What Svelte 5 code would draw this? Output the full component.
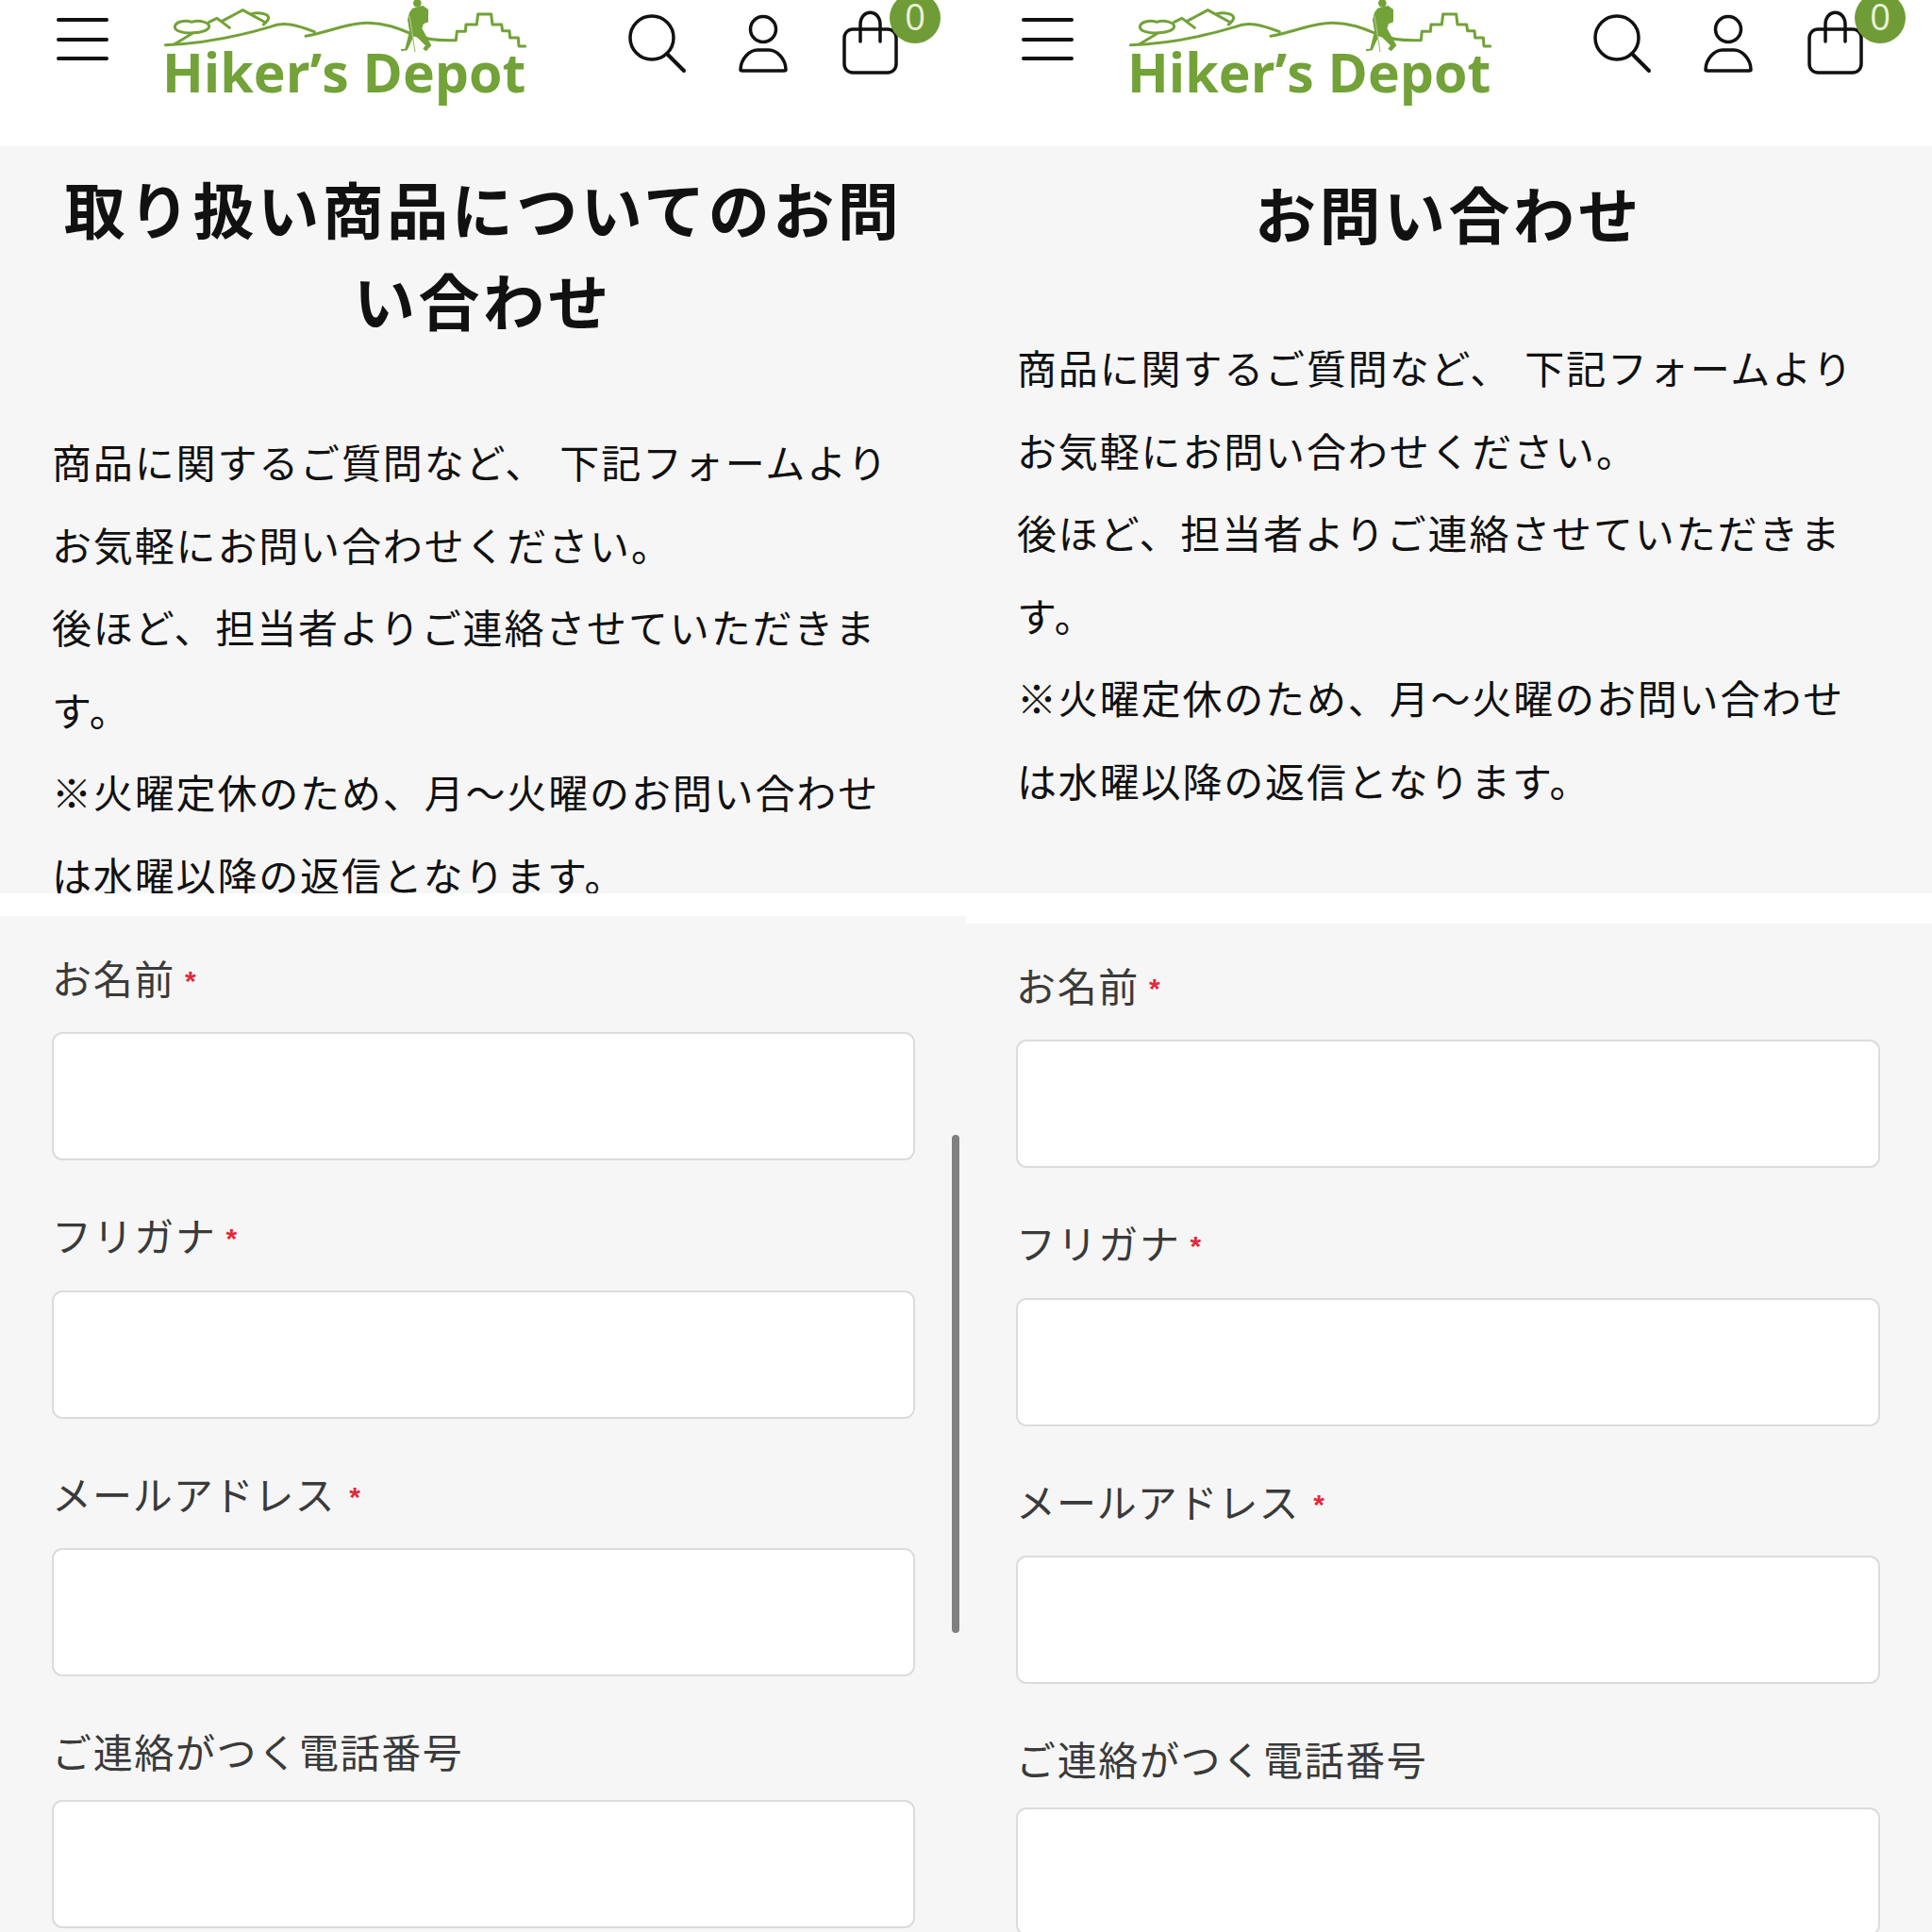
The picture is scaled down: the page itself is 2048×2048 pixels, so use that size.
<script>
  const columns = [
    { id: 'a', title: '取り扱い商品についてのお問い合わせ' },
    { id: 'b', title: 'お問い合わせ' }
  ];
  const fields = [
    { label: 'お名前', required: true },
    { label: 'フリガナ', required: true },
    { label: 'メールアドレス', required: true, wide: true },
    { label: 'ご連絡がつく電話番号', required: false }
  ];
</script>

<div class="page">
  {#each columns as col}
    <section class="col {col.id}">
      <header class="top">
        <div class="burger"><span></span><span></span><span></span></div>
        <svg class="logo" viewBox="0 0 1320 390" width="440" height="130" aria-label="Hiker's Depot">
          <g fill="none" stroke="#72a238" stroke-width="9" stroke-linecap="round" stroke-linejoin="round">
            <path d="M76 143C180 140 300 118 410 85C450 68 490 78 550 101" />
            <path d="M522 115C600 100 660 72 720 73C780 74 820 92 860 108C900 125 950 130 1000 128L1003 100H1030L1032 78H1066L1070 45H1112L1116 78H1145L1148 98H1170L1172 120H1198L1200 147H1220" />
            <path d="M105 140L165 104C135 108 105 98 106 85C108 70 135 62 160 70C185 62 215 72 215 84C215 96 190 104 165 104" />
            <path d="M215 70L240 58L280 88M255 68L322 32L395 72M350 44C375 38 405 44 404 58C402 68 395 72 388 78" />
          </g>
          <g fill="#72a238">
            <circle cx="877" cy="10" r="13" />
            <path d="M862 26L895 18L912 30L912 70L897 76L892 90L922 145L905 163L895 155L903 145L868 110L845 160L825 163L825 157L838 155L852 100L846 62L852 40Z" />
          </g>
          <path d="M852 50L870 165" stroke="#a9c67f" stroke-width="4" />
          <text class="logotext" x="66" y="295" textLength="1156" lengthAdjust="spacingAndGlyphs">Hiker’s Depot</text>
        </svg>
        <div class="icons">
          <svg class="i-search" viewBox="0 0 66 80" width="66" height="80">
            <circle cx="26" cy="40" r="23" fill="none" stroke="#111" stroke-width="3.5" />
            <path d="M42 57L60 75" stroke="#111" stroke-width="4" stroke-linecap="round" />
          </svg>
          <svg class="i-user" viewBox="0 0 56 80" width="56" height="80">
            <circle cx="28" cy="31" r="13.5" fill="none" stroke="#111" stroke-width="3.5" />
            <path d="M4 74C4 62 14 53 22 53H34C42 53 52 62 52 74C52 75 51 75 50 75H6C5 75 4 75 4 74Z" fill="none" stroke="#111" stroke-width="3.5" stroke-linejoin="round" />
          </svg>
          <div class="cart">
            <svg viewBox="0 0 60 80" width="60" height="80">
              <rect x="2" y="31" width="55" height="46" rx="9" fill="none" stroke="#111" stroke-width="3.5" />
              <path d="M19 44V26C19 9 40 9 40 26V44" fill="none" stroke="#111" stroke-width="3.5" stroke-linecap="round" />
            </svg>
            <span class="badge">0</span>
          </div>
        </div>
      </header>

      <div class="intro">
        <h1>{col.title}</h1>
        <p>
          商品に関するご質問など、 下記フォームより<br />
          お気軽にお問い合わせください。<br />
          後ほど、担当者よりご連絡させていただきます。<br />
          ※火曜定休のため、月～火曜のお問い合わせは水曜以降の返信となります。
        </p>
      </div>

      <form class="form">
        {#each fields as f}
          <div class="field">
            <label class="lab">
              <span class="labtext" class:tight={f.wide}>{f.label}{#if f.required}<em class:wide={f.wide}>*</em>{/if}</span>
              <input type="text" />
            </label>
          </div>
        {/each}
      </form>
    </section>
  {/each}
  <div class="scrollbar"></div>
</div>

<style>
  :global(body) {
    margin: 0;
    background: #fff;
  }
  .page {
    position: relative;
    display: grid;
    grid-template-columns: 1024px 1024px;
    width: 2048px;
    height: 2048px;
    overflow: hidden;
    font-family: "Noto Sans CJK JP", sans-serif;
    color: #222;
  }
  .top {
    height: 155px;
    display: flex;
    align-items: flex-start;
    overflow: hidden;
  }
  .b .top {
    margin-left: -1px;
  }
  .burger {
    width: 55px;
    margin: 19px 0 0 60px;
    display: flex;
    flex-direction: column;
    gap: 16.5px;
  }
  .burger span {
    display: block;
    height: 4px;
    background: #111;
    border-radius: 2px;
  }
  .logo {
    margin-left: 35px;
    flex: none;
  }
  .logotext {
    font-family: "Open Sans", sans-serif;
    font-weight: 700;
    font-size: 170px;
    fill: #72a238;
  }
  .icons {
    display: flex;
    align-items: flex-start;
    margin-left: 75px;
    gap: 48px;
  }
  .i-user {
    margin-left: 2px;
  }
  .cart {
    position: relative;
    width: 60px;
    height: 80px;
    margin-left: 8px;
  }
  .badge {
    position: absolute;
    left: 50px;
    top: -8px;
    width: 54px;
    height: 54px;
    border-radius: 50%;
    background: #6f9c36;
    color: #e9f2da;
    font: 38px/50px "Open Sans", sans-serif;
    text-align: center;
  }
  .intro {
    height: 792px;
    box-sizing: border-box;
    overflow: hidden;
    background: #f6f6f6;
    padding: 17px 55px 0;
  }
  .b .intro {
    padding: 22px 55px 0 54px;
  }
  h1 {
    margin: 0 0 79px;
    font-size: 65px;
    line-height: 97px;
    letter-spacing: 3.5px;
    font-weight: 700;
    text-align: center;
    color: #111;
  }
  .b h1 {
    margin-bottom: 71px;
  }
  p {
    margin: 0;
    font-size: 42px;
    line-height: 87.5px;
    letter-spacing: 1.85px;
    word-spacing: 3px;
    font-weight: 400;
    color: #111;
  }
  .form {
    margin-top: 24px;
    background: #f6f6f6;
    padding: 34.5px 54px 0 55px;
    height: 1200px;
  }
  .b .form {
    margin-top: 32px;
    padding-left: 53px;
    padding-right: 55px;
  }
  .field {
    margin-bottom: 49px;
  }
  .lab {
    display: flex;
    flex-direction: column;
    gap: 24.5px;
  }
  .field:last-child .lab {
    gap: 22px;
  }
  .labtext {
    font-size: 42px;
    line-height: 60px;
    letter-spacing: 1.65px;
    color: #3a3a3a;
  }
  .labtext.tight {
    letter-spacing: 0.9px;
  }
  em {
    font-style: normal;
    font-weight: 700;
    color: #e3283a;
    font-size: 30px;
    margin-left: 10px;
    font-family: "Liberation Sans", sans-serif;
    vertical-align: 4px;
  }
  em.wide {
    margin-left: 15px;
  }
  input {
    display: block;
    width: 100%;
    height: 136px;
    box-sizing: border-box;
    background: #fff;
    border: 2px solid #dcdcdc;
    border-radius: 11px;
    margin: 0;
    padding: 0;
  }
  .scrollbar {
    position: absolute;
    left: 1009px;
    top: 1203px;
    width: 8px;
    height: 528px;
    border-radius: 4px;
    background: #808080;
  }
</style>
